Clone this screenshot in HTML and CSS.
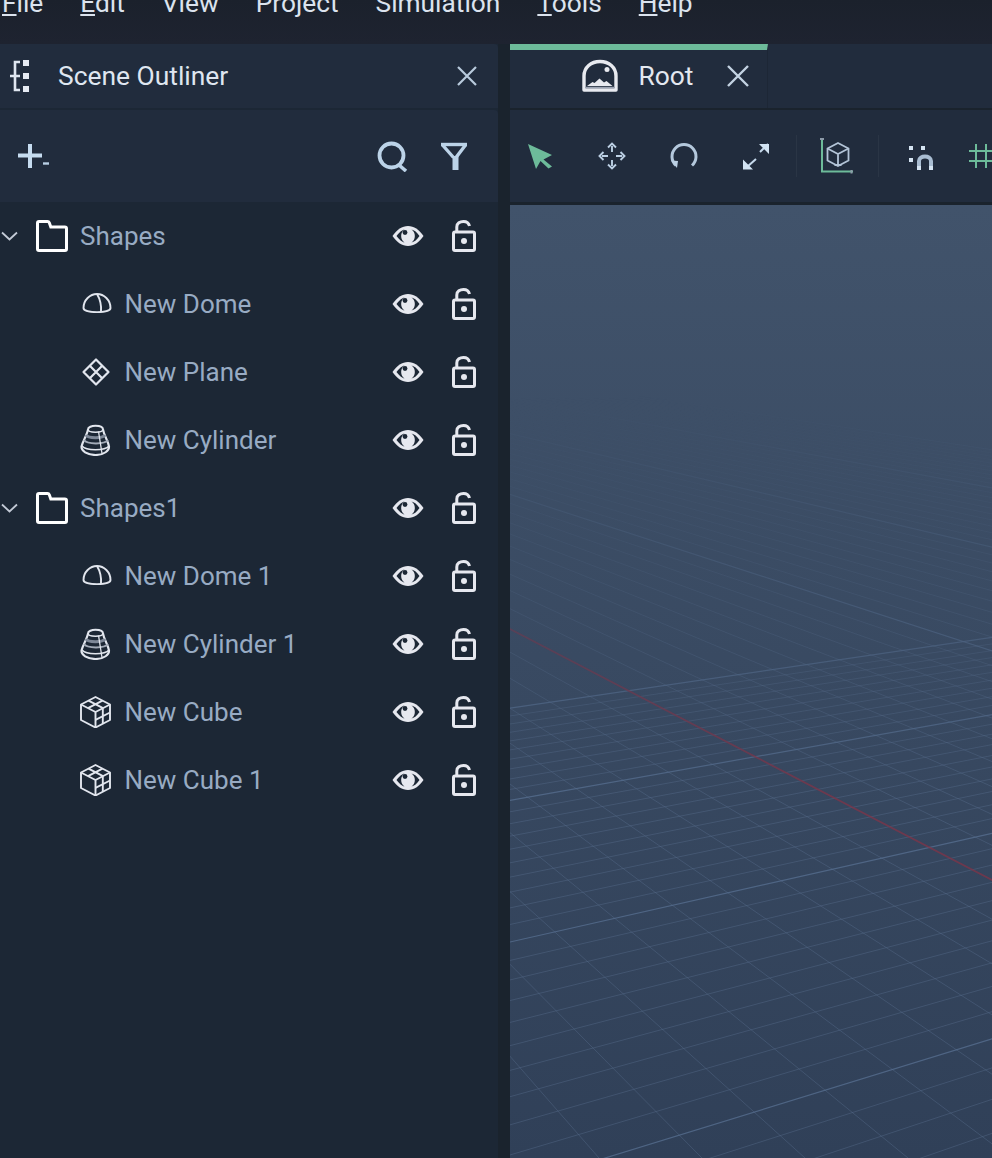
FILE: index.html
```html
<!DOCTYPE html>
<html lang="en">
<head>
<meta charset="utf-8">
<title>Scene Outliner</title>
<link rel="stylesheet" href="styles.css">
</head>
<body>
<svg class="defs" aria-hidden="true">
  <symbol id="i-chevron" viewBox="0 0 18 12"><path d="M2 2.500l7.500 7 7.500-7" fill="none" stroke="#c3cad6" stroke-width="1.800"/></symbol>
  <symbol id="i-folder" viewBox="0 0 32 32"><path d="M3 1.500h8.500c1 0 1.500.500 1.800 1.300l1.500 4.200h14c1 0 1.700.700 1.700 1.700V29c0 1-.700 1.500-1.500 1.500H3c-1 0-1.500-.500-1.500-1.500V3c0-1 .500-1.500 1.500-1.500z" fill="none" stroke="#fff" stroke-width="3"/></symbol>
  <symbol id="i-eye" viewBox="0 0 32 22"><path d="M.500 11C5 4.500 10 1 16 1s11 3.500 15.500 10C27 17.500 22 21 16 21S5 17.500.500 11z" fill="#e6e8ef"/><path d="M4.500 11C8 6.800 10 5 12.500 4.500a8 8 0 0 0 0 13C10 17 8 15.200 4.500 11zM19.500 4.500c2.500.500 5 2.300 8 6.500-3 4.200-5.500 6-8 6.500a8 8 0 0 0 0-13z" fill="#1c2735"/><circle cx="13" cy="7.500" r="2.400" fill="#1c2735"/></symbol>
  <symbol id="i-lock" viewBox="0 0 24 32"><path d="M4.800 11V7C4.800 3.200 8 1.500 11.500 1.500c3 0 5.300 1.600 6 4.500" fill="none" stroke="#e6e8ef" stroke-width="3"/><rect x="1.500" y="12" width="21" height="18.500" rx="1.500" fill="none" stroke="#e6e8ef" stroke-width="3"/><circle cx="12" cy="21" r="3" fill="#e6e8ef"/></symbol>
  <symbol id="i-dome" viewBox="0 0 32 32"><g fill="none" stroke="#e2e6ee" stroke-width="1.900"><path d="M3.500 20C3.500 12 10 6 17 6s13.500 6 13.500 14c0 5.500-27 5.500-27 0z"/><path d="M17 6c3 5 4.500 12 4 18"/></g></symbol>
  <symbol id="i-plane" viewBox="0 0 32 32"><g fill="none" stroke="#e2e6ee" stroke-width="2.200" stroke-linejoin="round"><path d="M16 3.500L28.500 16 16 28.500 3.500 16z"/><path d="M9.800 9.800l12.400 12.400M22.200 9.800L9.800 22.200"/></g></symbol>
  <symbol id="i-cyl" viewBox="0 0 32 32"><g fill="none" stroke="#e2e6ee"><path d="M8 5.500c0-5 15-5 15 0 1 6 5 11 6 17 .500 4-5 8.500-13.500 8.500S1 27 1.500 22.500C3 16.500 7 11 8 5.500z" stroke-width="2.100"/><path d="M8 5.500c0 3.500 15 3.500 15 0" stroke-width="1.500"/><path d="M6 11c2 3.500 17 3.500 19 0" stroke="#7d8797" stroke-width="3"/><path d="M4 16c3 4.500 21 4.500 24 0" stroke="#a3abb8" stroke-width="2"/><path d="M2 22c4 5 23 5 27 0" stroke-width="1.600"/><path d="M18.500 7.500l3.500 22" stroke-width="1.300"/></g></symbol>
  <symbol id="i-cube" viewBox="0 0 32 32"><g fill="none" stroke="#e2e6ee" stroke-width="1.900" stroke-linejoin="round"><path d="M15.500 1l14.500 7.500V24l-14.500 7.500L1 24V8.500z"/><path d="M1 8.500L15.500 16 30 8.500M15.500 16v15.500"/><path d="M8.500 4.700l14.500 7.500M22.500 4.700L8 12.200M22.800 12.300v15.500M15.500 23.800L30 16.500"/></g></symbol>
</svg>

<header class="menubar">
  <span class="menu-item"><u>F</u>ile</span>
  <span class="menu-item"><u>E</u>dit</span>
  <span class="menu-item">View</span>
  <span class="menu-item">Project</span>
  <span class="menu-item">Simulation</span>
  <span class="menu-item"><u>T</u>ools</span>
  <span class="menu-item"><u>H</u>elp</span>
</header>

<main class="workspace">
  <section class="outliner">
    <div class="panel-head">
      <svg class="head-icon" viewBox="8 58 24 36"><path d="M20 62h-5v28h5M10 76h10" fill="none" stroke="#dfe6f0" stroke-width="2.600"/><path d="M23 60h6v6h-6zM23 73h6v6h-6zM23 86h6v6h-6z" fill="#e6ebf3"/></svg>
      <span class="panel-title">Scene Outliner</span>
      <svg class="close close-panel" viewBox="0 0 22 22"><path d="M2 2l18 18M20 2L2 20" stroke="#b9cbdd" stroke-width="2.200"/></svg>
    </div>
    <div class="panel-tools">
      <svg class="add" viewBox="16 142 36 28"><path d="M18 155.500h24M30 144v24" stroke="#c6dcf0" stroke-width="4"/><path d="M43 163.500h6" stroke="#b8cfe4" stroke-width="2.400"/></svg>
      <svg class="search" viewBox="376 140 32 32"><circle cx="391.500" cy="155.500" r="12" fill="none" stroke="#bcd3e8" stroke-width="3.800"/><path d="M399 165l7 6" stroke="#bcd3e8" stroke-width="3.600"/></svg>
      <svg class="filter" viewBox="438 142 32 32"><path d="M441 146.500h26" stroke="#bcd3e8" stroke-width="3.400"/><path d="M442.500 147l11 12.500M465.500 147l-9.500 12.500" stroke="#bcd3e8" stroke-width="3.400"/><path d="M452.500 158h6v14h-6z" fill="#bcd3e8"/></svg>
    </div>
    <ul class="tree">
      <li class="row folder"><svg class="chev"><use href="#i-chevron"/></svg><svg class="ic"><use href="#i-folder"/></svg><span class="name">Shapes</span><svg class="eye"><use href="#i-eye"/></svg><svg class="lock"><use href="#i-lock"/></svg></li>
      <li class="row child"><svg class="ic"><use href="#i-dome"/></svg><span class="name">New Dome</span><svg class="eye"><use href="#i-eye"/></svg><svg class="lock"><use href="#i-lock"/></svg></li>
      <li class="row child"><svg class="ic"><use href="#i-plane"/></svg><span class="name">New Plane</span><svg class="eye"><use href="#i-eye"/></svg><svg class="lock"><use href="#i-lock"/></svg></li>
      <li class="row child"><svg class="ic"><use href="#i-cyl"/></svg><span class="name">New Cylinder</span><svg class="eye"><use href="#i-eye"/></svg><svg class="lock"><use href="#i-lock"/></svg></li>
      <li class="row folder"><svg class="chev"><use href="#i-chevron"/></svg><svg class="ic"><use href="#i-folder"/></svg><span class="name">Shapes1</span><svg class="eye"><use href="#i-eye"/></svg><svg class="lock"><use href="#i-lock"/></svg></li>
      <li class="row child"><svg class="ic"><use href="#i-dome"/></svg><span class="name">New Dome 1</span><svg class="eye"><use href="#i-eye"/></svg><svg class="lock"><use href="#i-lock"/></svg></li>
      <li class="row child"><svg class="ic"><use href="#i-cyl"/></svg><span class="name">New Cylinder 1</span><svg class="eye"><use href="#i-eye"/></svg><svg class="lock"><use href="#i-lock"/></svg></li>
      <li class="row child"><svg class="ic"><use href="#i-cube"/></svg><span class="name">New Cube</span><svg class="eye"><use href="#i-eye"/></svg><svg class="lock"><use href="#i-lock"/></svg></li>
      <li class="row child"><svg class="ic"><use href="#i-cube"/></svg><span class="name">New Cube 1</span><svg class="eye"><use href="#i-eye"/></svg><svg class="lock"><use href="#i-lock"/></svg></li>
    </ul>
  </section>

  <section class="stage">
    <div class="tabbar">
      <div class="tab">
        <svg class="tab-icon" viewBox="580 56 40 36"><path d="M584 88V74c0-8.500 7-14.500 16-14.500S616 65.500 616 74v14z" fill="none" stroke="#e8eaf0" stroke-width="3.400" stroke-linejoin="round"/><circle cx="607" cy="67.500" r="2.500" fill="#e8eaf0"/><path d="M587 84l5.500-4 2 1 5-4.500 4.500 4 2.500-1.500 6 5z" fill="#e8eaf0"/><path d="M585 85.500h30" stroke="#9aa2b2" stroke-width="1.500"/></svg>
        <span class="tab-title">Root</span>
        <svg class="close close-tab" viewBox="0 0 22 22"><path d="M1 1l20 20M21 1L1 21" stroke="#c3d2e2" stroke-width="2.400"/></svg>
      </div>
    </div>
    <div class="toolbar">
      <svg class="tool" viewBox="524 140 32 32"><path d="M528 144l24 11-8.500 4.500 8.500 7-3.500 2-8-7.500-4.500 8z" fill="#6dbb9a"/></svg>
      <svg class="tool" viewBox="596 140 32 32"><g fill="none" stroke="#bcd0e4" stroke-width="1.900"><path d="M612 146v6M612 160v6M602 156h6M616 156h6"/><path d="M608 147.500l4-4 4 4M608 164.500l4 4 4-4M603.500 152l-4 4 4 4M620.500 152l4 4-4 4"/></g></svg>
      <svg class="tool" viewBox="669 140 32 32"><path d="M693 165.500A12 12 0 1 0 677 165.500" fill="none" stroke="#b4c8dc" stroke-width="3"/><path d="M672 160.500l7 .5-1 7z" fill="#bcd0e4"/></svg>
      <svg class="tool tool-wide" viewBox="741 140 33 32"><path d="M757 159l-9 8M761 152l8-8" stroke="#c5d9ec" stroke-width="2"/><path d="M744 159.500v10h10l-3-3-4-4zM770 154v-10h-10l3 3 4 4z" fill="#d2e3f3"/></svg>
      <span class="sep"></span>
      <svg class="tool-cube" viewBox="821 136 35 40"><path d="M823 140v31.500h31" fill="none" stroke="#6dbb9a" stroke-width="2"/><path d="M821 139h4M852.500 170v3.500" stroke="#8d9ba9" stroke-width="2"/><g fill="none" stroke="#b3c4d7" stroke-width="1.800"><path d="M839 143l10.500 5.500v12L839 166l-10.500-5.500v-12z"/><path d="M828.500 148.500L839 154l10.500-5.500M839 154v12M835.500 165h7"/></g></svg>
      <span class="sep"></span>
      <svg class="tool-magnet" viewBox="903 140 38 32"><path d="M910 146h4v4h-4zM922 146h4v4h-4zM910 158h4v4h-4z" fill="#d5e4f2"/><path d="M920 170v-9c0-6 12-6 12 0v9" fill="none" stroke="#a9bdd2" stroke-width="4"/><path d="M918 166h4v4h-4zM930 166h4v4h-4z" fill="#d5e4f2"/></svg>
      <svg class="tool-grid" viewBox="966 140 40 32"><path d="M977 144v24M987 144v24M970 151h30M970 161h30" stroke="#6dbb9a" stroke-width="2"/></svg>
    </div>
    <div class="viewport">
      <svg id="ground" class="ground" viewBox="510 205 482 953" preserveAspectRatio="none"></svg>
    </div>
  </section>
</main>
<script src="script.js"></script>
</body>
</html>
```
FILE: styles.css
```css
* { box-sizing: border-box; }
html, body { margin: 0; height: 100%; }
body {
  width: 992px;
  height: 1158px;
  overflow: hidden;
  display: flex;
  flex-direction: column;
  background: #1a232d;
  font-family: Roboto, "Liberation Sans", sans-serif;
  font-size: 26px;
}
.defs { position: absolute; width: 0; height: 0; }

.menubar {
  flex: none;
  height: 44px;
  display: flex;
  gap: 37px;
  padding-left: 2px;
  background: linear-gradient(#1b212c, #1e2330);
  color: #dbe3ee;
  font-size: 26.300px;
  overflow: hidden;
  line-height: 24px;
}
.menu-item { margin-top: -9.500px; height: 30px; white-space: nowrap; }
.menu-item u { text-decoration-thickness: 2px; text-underline-offset: 2px; }

.workspace { flex: 1; display: flex; gap: 12px; min-height: 0; }

.outliner { flex: none; width: 498px; display: flex; flex-direction: column; background: #1c2735; }
.panel-head {
  flex: none;
  height: 64px;
  display: flex;
  align-items: center;
  background: #212c3d;
  border-top-right-radius: 4px;
  padding-left: 8px;
  color: #dfe6f0;
}
.head-icon { width: 24px; height: 36px; }
.panel-title { margin-left: 26px; flex: 1; font-size: 26.400px; }
.close { display: block; }
.close-panel { width: 22px; height: 22px; margin-right: 20px; }
.panel-tools {
  flex: none;
  height: 92px;
  margin-top: 2px;
  display: flex;
  align-items: center;
  background: #212c3d;
  border-top-right-radius: 4px;
  padding-left: 16px;
}
.add { width: 36px; height: 28px; margin-right: auto; }
.search { width: 32px; height: 32px; margin-right: 30px; }
.filter { width: 32px; height: 32px; margin-right: 28px; }

.tree { list-style: none; margin: 0; padding: 0; flex: 1; }
.row { height: 68px; display: flex; align-items: center; color: #98abc3; }
.row .name { flex: 1; white-space: nowrap; }
.ic { width: 32px; height: 32px; flex: none; }
.chev { width: 18px; height: 12px; flex: none; margin-right: 18px; }
.folder .ic { margin-right: 12px; }
.child { padding-left: 80px; }
.child .ic { margin-right: 12.500px; }
.eye { width: 32px; height: 22px; flex: none; margin-right: 28px; }
.lock { width: 24px; height: 32px; flex: none; margin-right: 22px; }

.stage { flex: 1; min-width: 0; display: flex; flex-direction: column; overflow: hidden; }
.tabbar { flex: none; height: 64px; background: #212c3d; display: flex; }
.tab {
  width: 258px;
  display: flex;
  align-items: center;
  padding-left: 70px;
  border-top: 6px solid #6dbb9a;
  border-right: 1px solid #1d2736;
  color: #e3e8f0;
}
.tab-icon { width: 40px; height: 36px; margin-top: -6px; flex: none; }
.tab-title { margin-left: 18.500px; margin-top: -6px; font-size: 26.400px; }
.close-tab { width: 22px; height: 22px; margin-left: 33px; margin-top: -6px; }

.toolbar {
  flex: none;
  height: 92px;
  margin-top: 2px;
  padding-left: 14px;
  display: flex;
  align-items: center;
  background: #212c3d;
  overflow: hidden;
}
.tool { width: 32px; height: 32px; flex: none; margin-right: 40px; }
.tool-wide { width: 33px; margin-right: 23px; }
.sep { width: 1px; height: 42px; flex: none; background: #2a3545; margin-right: 23px; }
.tool-cube { width: 35px; height: 40px; flex: none; margin-right: 23px; }
.tool-magnet { width: 38px; height: 32px; flex: none; margin-right: 25px; }
.tool-grid { width: 40px; height: 32px; flex: none; }

.viewport {
  flex: 1;
  margin-top: 3px;
  min-height: 0;
  background: linear-gradient(#41536b, #304058);
}
.ground {
  display: block;
  width: 100%;
  height: 100%;
  -webkit-mask-image: linear-gradient(to bottom, transparent 20%, #000 62%);
  mask-image: linear-gradient(to bottom, transparent 20%, #000 62%);
}
.ground .minor { stroke: rgba(88, 110, 140, 0.42); stroke-width: 1; }
.ground .major { stroke: rgba(88, 112, 146, 0.75); stroke-width: 1.200; }
.ground .axis { stroke: rgba(128, 52, 72, 0.75); stroke-width: 1.800; }
```
FILE: script.js
```js
// Perspective ground grid: two families of lines converging on vanishing points.
(function () {
  var svg = document.getElementById('ground');
  var NS = 'http://www.w3.org/2000/svg';
  var H = 272;
  var VA = { x: -176, y: H };
  var VB = { x: 3480, y: H };

  function add(x1, y1, x2, y2, cls) {
    var l = document.createElementNS(NS, 'line');
    l.setAttribute('x1', x1); l.setAttribute('y1', y1);
    l.setAttribute('x2', x2); l.setAttribute('y2', y2);
    l.setAttribute('class', cls);
    svg.appendChild(l);
  }

  var lines = [];
  // Family A: fixed spacing where it crosses y = 1158.
  for (var n = -40; n <= 10; n++) {
    var cx = 1526 - n * 103;
    lines.push([VA.x, VA.y, cx, 1158, n === 0 ? 'axis' : (n % 10 === 0 ? 'major' : 'minor')]);
  }
  // Family B: 1/(y - H) is uniform along the left edge.
  for (var m = -110; m <= 20; m++) {
    var y510 = H + 1 / (1 / 670 - m * 0.00004 * -1);
    var k = (y510 - H) / (510 - VB.x);
    var yEnd = H + k * (992 - VB.x);
    lines.push([510, y510, 992, yEnd, m % 10 === 0 ? 'major' : 'minor']);
  }
  lines.sort(function (a, b) { return a[4] === 'axis' ? 1 : (b[4] === 'axis' ? -1 : 0); });
  lines.forEach(function (l) { add(l[0], l[1], l[2], l[3], l[4]); });
})();
```
